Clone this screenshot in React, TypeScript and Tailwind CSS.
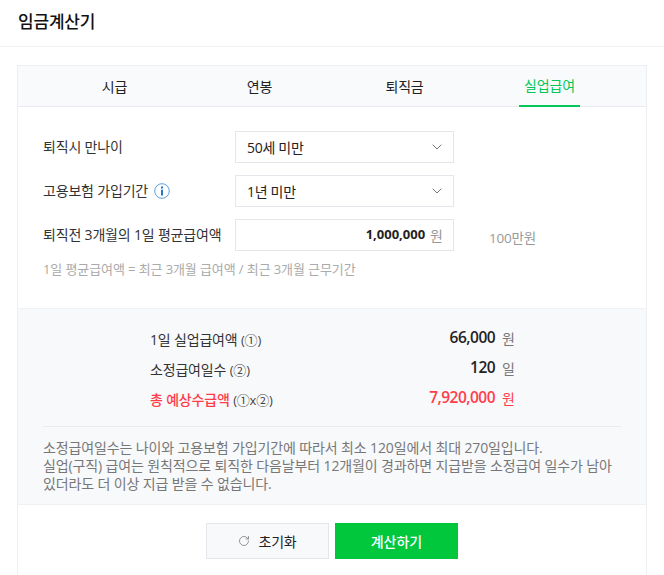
import { ChevronDown, RotateCw } from "lucide-react";

const tabs = ["시급", "연봉", "퇴직금", "실업급여"];

const results = [
  { label: "1일 실업급여액", note: "(①)", value: "66,000", unit: "원" },
  { label: "소정급여일수", note: "(②)", value: "120", unit: "일" },
  { label: "총 예상수급액", note: "(①x②)", value: "7,920,000", unit: "원", red: true },
];

function SelectBox({ value }: { value: string }) {
  return (
    <div className="flex h-8 w-[219px] items-center justify-between border border-[#e3e6eb] pl-[11px] pr-2">
      <span className="text-[14px] tracking-[-0.3px] text-[#222]">{value}</span>
      <ChevronDown className="h-4 w-4 text-[#777]" strokeWidth={1.5} />
    </div>
  );
}

export default function App() {
  return (
    <div className="h-[575px] w-[664px] overflow-hidden bg-white font-['Open_Sans','Noto_Sans_CJK_KR',sans-serif]">
      <header className="flex h-[47px] items-center border-b border-[#f0f1f3] pb-[2px] pl-[18px]">
        <h1 className="text-[17px] font-medium tracking-[-0.2px] text-[#111]">임금계산기</h1>
      </header>

      <div className="ml-[17px] mt-[18px] w-[630px] border border-b-0 border-[#eceef2]">
        <nav className="flex h-[41px] border-b border-[#e8eaee] bg-[#f9fafc] pl-[24px]">
          {tabs.map((tab, i) => (
            <div key={tab} className="flex w-[145px] justify-center">
              <div
                className={
                  i === 3
                    ? "flex h-[41px] w-[61px] items-center justify-center border-b-[2px] border-[#03c75a] text-[14px] tracking-[-0.1px] text-[#03c75a]"
                    : "flex h-[41px] items-center justify-center text-[14px] tracking-[-0.2px] text-[#222]"
                }
              >
                {tab}
              </div>
            </div>
          ))}
        </nav>

        <section className="h-[201px] pl-[25px] pt-[24px]">
          <div className="flex items-start">
            <label className="w-[192px] pt-[5px] text-[14px] tracking-[-0.18px] text-[#333]">퇴직시 만나이</label>
            <SelectBox value="50세 미만" />
          </div>
          <div className="mt-[12px] flex items-start">
            <label className="flex w-[192px] items-center gap-[6px] pt-[5px] text-[14px] tracking-[-0.18px] text-[#333]">
              고용보험 가입기간
              <svg viewBox="0 0 16 16" className="h-4 w-4">
                <circle cx="8" cy="8" r="7.3" fill="none" stroke="#5a9fe0" strokeWidth="1" />
                <rect x="7" y="3.5" width="2" height="2" fill="#1f78c8" />
                <rect x="7" y="6.7" width="2" height="5.8" fill="#1f78c8" />
              </svg>
            </label>
            <SelectBox value="1년 미만" />
          </div>
          <div className="mt-[12px] flex items-start">
            <label className="w-[192px] pt-[5px] text-[14px] tracking-[-0.18px] text-[#333]">
              퇴직전 3개월의 1일 평균급여액
            </label>
            <div className="flex h-8 w-[219px] items-center justify-end gap-[5px] border border-[#e3e6eb] pr-[10px]">
              <span className="text-[13px] font-bold text-[#222]">1,000,000</span>
              <span className="text-[14px] text-[#999]">원</span>
            </div>
            <span className="ml-[35px] pt-[9px] text-[13.5px] tracking-[-0.2px] text-[#999]">100만원</span>
          </div>
          <p className="mt-[9px] text-[13px] tracking-[-0.1px] text-[#aaa]">
            1일 평균급여액 = 최근 3개월 급여액 / 최근 3개월 근무기간
          </p>
        </section>

        <section className="h-[197px] border-y border-[#f0f1f4] bg-[#f8f9fb] px-[25px]">
          <div className="h-[117px] pt-[14px]">
            {results.map((row) => (
              <div key={row.label} className="flex h-[30px] items-center pl-[107px] pr-[106px]">
                <span className="pt-[3px] text-[14px] tracking-[-0.18px] text-[#333]">
                  <span className={row.red ? "font-medium text-[#ff3d4a]" : ""}>{row.label}</span>{" "}
                  <span className="text-[13px] text-[#444]">{row.note}</span>
                </span>
                <span
                  className={`ml-auto text-[15.5px] font-semibold tracking-[-0.5px] ${row.red ? "text-[#ff3d4a]" : "text-[#222]"}`}
                >
                  {row.value}
                </span>
                <span className={`ml-[7px] text-[14px] ${row.red ? "text-[#ff3d4a]" : "text-[#777]"}`}>{row.unit}</span>
              </div>
            ))}
          </div>
          <p className="border-t border-[#e9ebee] pt-[12px] text-[14px] leading-[18px] tracking-[-0.13px] text-[#777]">
            소정급여일수는 나이와 고용보험 가입기간에 따라서 최소 120일에서 최대 270일입니다.
            <br />
            실업(구직) 급여는 원칙적으로 퇴직한 다음날부터 12개월이 경과하면 지급받을 소정급여 일수가 남아
            <br />
            있더라도 더 이상 지급 받을 수 없습니다.
          </p>
        </section>

        <div className="flex justify-center gap-[6px] pb-[40px] pt-[18px]">
          <button className="flex h-9 w-[123px] items-center justify-center gap-2 border border-[#e3e6eb] bg-[#f8f9fb] text-[14px] tracking-[-0.2px] text-[#222]">
            <RotateCw className="h-[12px] w-[12px] text-[#777]" strokeWidth={1.5} />
            초기화
          </button>
          <button className="h-9 w-[123px] bg-[#00c73c] text-[14px] font-medium text-white">계산하기</button>
        </div>
      </div>
    </div>
  );
}
